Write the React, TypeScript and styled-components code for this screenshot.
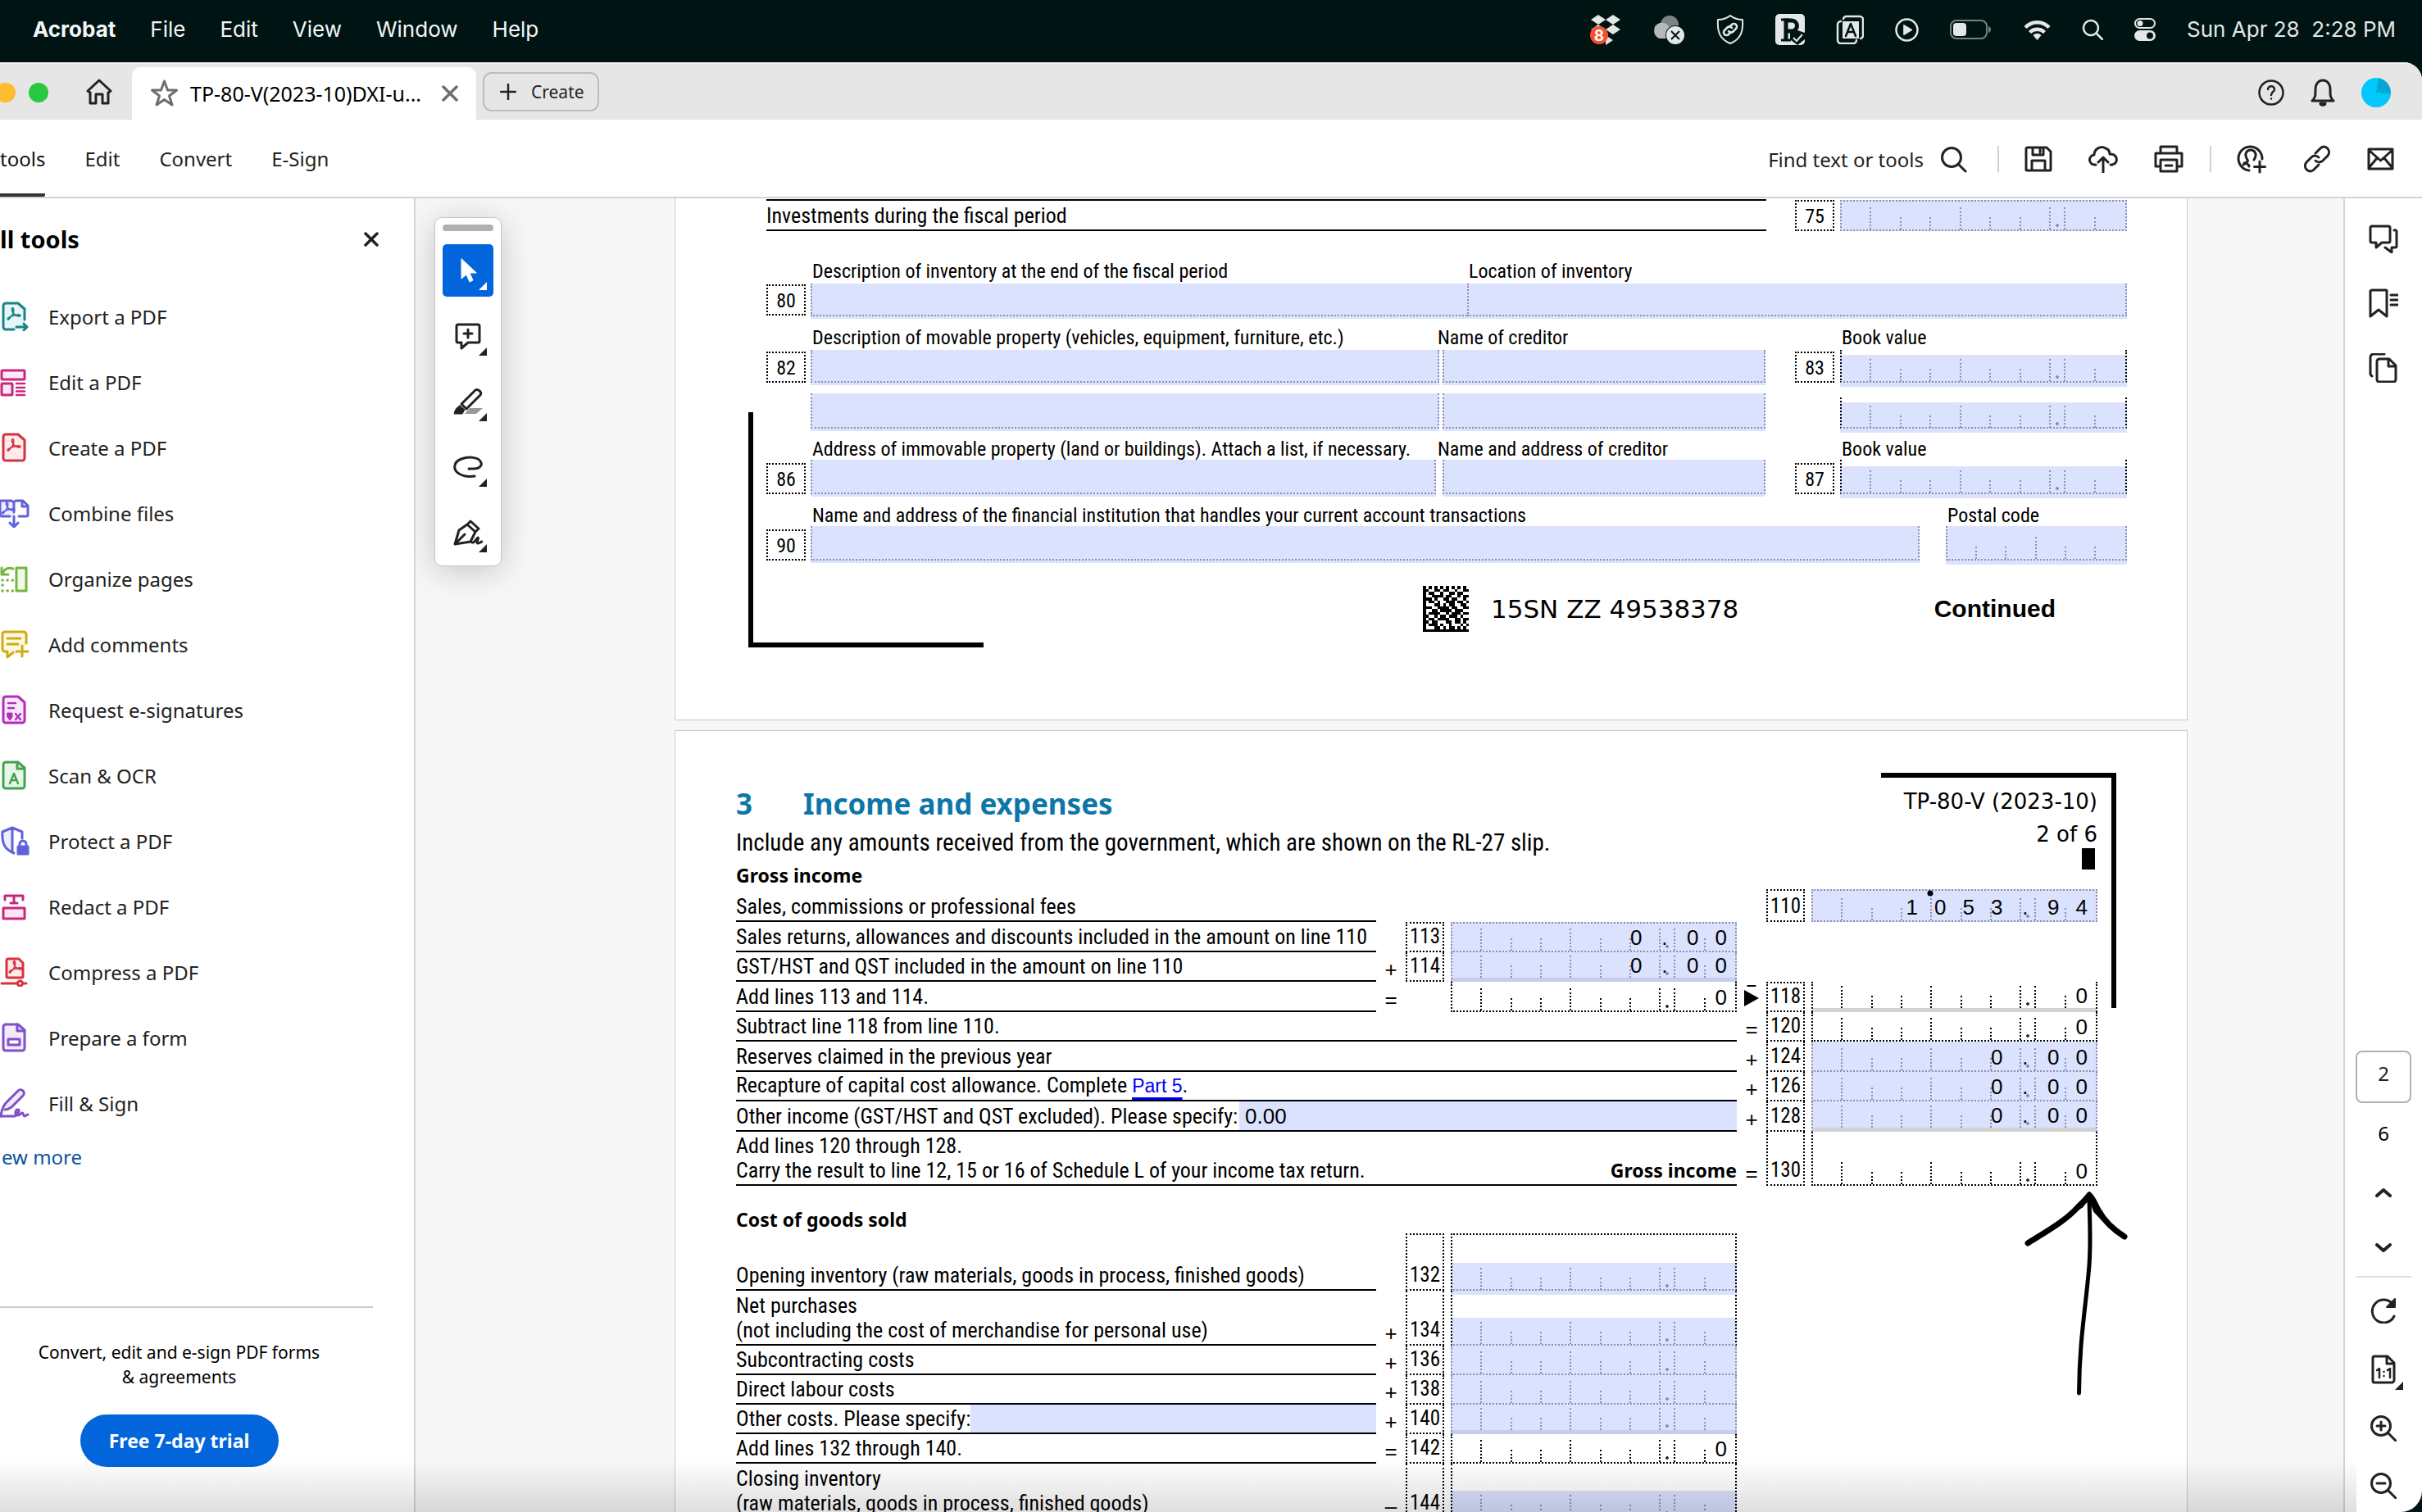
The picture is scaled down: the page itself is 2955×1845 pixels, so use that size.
import React from 'react';
import styled, { createGlobalStyle, css } from 'styled-components';

const ui = '"Noto Sans", "Open Sans", sans-serif';
const mac = 'Inter, Roboto, sans-serif';
const form = '"Roboto Condensed", Roboto, sans-serif';
const machine = '"DejaVu Sans", sans-serif';
const entry = '"Liberation Sans", Arial, sans-serif';

const ink = '#222222';
const blue = '#0265dc';
const field = '#dae2fe';
const fieldInk = '#8990b3';
const edge = '#d3d3d3';

const GlobalStyle = createGlobalStyle`
  *, *::before, *::after { box-sizing: border-box; }
  body { margin: 0; background: #001413; font-family: ${ui}; color: ${ink}; overflow: hidden; }
  h1, h2, h3, p, ul { margin: 0; padding: 0; }
  button, input { font: inherit; color: inherit; border: 0; padding: 0; margin: 0; background: none; border-radius: 0; }
  svg { display: block; flex: none; }
`;

/* ---------- shell ---------- */

const Shell = styled.div`
  position: relative;
  height: 100vh;
  display: flex;
  flex-direction: column;
`;

const MenuBar = styled.header`
  flex: none;
  height: 76px;
  padding: 0 32px 4px 40px;
  display: flex;
  align-items: center;
  justify-content: space-between;
  font-family: ${mac};
  font-size: 26px;
  color: #f4f7f7;
`;

const Menus = styled.nav`
  display: flex;
  gap: 42px;
`;

const MenuButton = styled.button<{ $strong?: boolean }>`
  font-weight: ${(p) => (p.$strong ? 700 : 400)};
  line-height: 32px;
`;

const Status = styled.div`
  display: flex;
  align-items: center;
  color: #e3e7e7;
`;

const StatusIcons = styled.div`
  display: flex;
  align-items: center;
  gap: 38px;
  margin-right: 38px;
`;

const Clock = styled.time`
  white-space: pre;
  line-height: 32px;
`;

const Win = styled.div`
  flex: 1;
  min-height: 0;
  display: flex;
  flex-direction: column;
  background: #fff;
  border-radius: 0 22px 26px 0;
  overflow: hidden;
`;

const TitleBar = styled.div`
  flex: none;
  height: 70px;
  display: flex;
  background: #e6e6e6;
  border-top: 2px solid #f3f3f3;
`;

const Lights = styled.div`
  display: flex;
  align-items: center;
  gap: 16px;
  width: 105px;
  padding-top: 2px;
`;

const Light = styled.span<{ $color: string; $cut?: boolean }>`
  width: ${(p) => (p.$cut ? 19 : 24)}px;
  height: 24px;
  border-radius: ${(p) => (p.$cut ? '4px 12px 12px 4px' : '12px')};
  background: ${(p) => p.$color};
`;

const IconButton = styled.button`
  display: flex;
  align-items: center;
  justify-content: center;
`;

const Tab = styled.div`
  margin: 4px 8px 0 24px;
  width: 420px;
  padding: 0 22px;
  display: flex;
  align-items: center;
  background: #fff;
  border-radius: 10px 10px 0 0;
  color: #000;
  font-size: 25px;
`;

const TabName = styled.span`
  flex: 1;
  margin-left: 14px;
  white-space: nowrap;
`;

const CreateButton = styled.button`
  align-self: center;
  display: flex;
  align-items: center;
  gap: 18px;
  height: 48px;
  padding: 0 16px 0 19px;
  border: 2px solid #bdbdbd;
  border-radius: 11px;
  font-size: 21px;
`;

const TitleActions = styled.div`
  margin-left: auto;
  padding: 2px 38px 0 0;
  display: flex;
  align-items: center;
  gap: 32px;
`;

const Avatar = styled.span`
  width: 36px;
  height: 36px;
  border-radius: 50%;
  background: conic-gradient(from 10deg, #05a8d2 0 85deg, #00c8ff 85deg);
`;

const ToolBar = styled.div`
  flex: none;
  height: 96px;
  display: flex;
  align-items: stretch;
  border-bottom: 2px solid ${edge};
  font-size: 24px;
`;

const Modes = styled.nav`
  display: flex;
  gap: 48px;
`;

const Mode = styled.button<{ $on?: boolean }>`
  padding-top: 4px;
  color: ${(p) => (p.$on ? '#111' : ink)};
  border-bottom: 4px solid ${(p) => (p.$on ? '#333' : 'transparent')};
  border-radius: 0 0 2px 0;
`;

const Actions = styled.div`
  margin-left: auto;
  padding: 2px 34px 0 0;
  display: flex;
  align-items: center;
`;

const Find = styled.button`
  display: flex;
  align-items: center;
  gap: 20px;
  margin-right: 37px;
`;

const Rule = styled.span`
  width: 2px;
  height: 32px;
  background: #cfcfcf;
`;

const ActionGroup = styled.div`
  display: flex;
  align-items: center;
  gap: 44px;
  margin-left: 31px;
  margin-right: 32px;
  &:last-child { margin-right: 0; }
`;

const Body = styled.div`
  flex: 1;
  min-height: 0;
  display: flex;
`;

/* ---------- left panel ---------- */

const Panel = styled.aside`
  flex: none;
  width: 507px;
  border-right: 2px solid ${edge};
  display: flex;
  flex-direction: column;
`;

const PanelHead = styled.div`
  display: flex;
  align-items: center;
  justify-content: space-between;
  padding: 30px 43px 0 0;
`;

const PanelTitle = styled.h2`
  font-size: 29px;
  line-height: 40px;
  color: #000;
`;

const ToolList = styled.ul`
  list-style: none;
  padding-top: 34px;
`;

const Tool = styled.button`
  display: flex;
  align-items: center;
  gap: 23px;
  width: 100%;
  height: 80px;
  font-size: 24px;
  text-align: left;
`;

const ViewMore = styled.a`
  align-self: flex-start;
  padding-left: 2px;
  margin-top: 8px;
  font-size: 24px;
  line-height: 36px;
  color: #0f559f;
  text-decoration: none;
`;

const Promo = styled.div`
  margin: auto 50px 55px 0;
  padding-top: 39px;
  border-top: 2px solid #cacaca;
  display: flex;
  flex-direction: column;
  align-items: center;
  color: #000;
`;

const PromoText = styled.p`
  width: 380px;
  font-size: 21px;
  line-height: 30px;
  text-align: center;
  margin-left: -18px;
`;

const TrialButton = styled.button`
  margin: 31px 0 0 -18px;
  width: 242px;
  height: 64px;
  border-radius: 32px;
  background: ${blue};
  color: #fff;
  font-size: 23px;
  font-weight: 700;
`;

/* ---------- document ---------- */

const Canvas = styled.main`
  position: relative;
  flex: 1;
  min-width: 0;
  overflow: hidden;
  background: #f7f7f7;
`;

const Palette = styled.div`
  position: absolute;
  top: 23px;
  left: 23px;
  width: 82px;
  padding: 8px 9px 8px;
  display: flex;
  flex-direction: column;
  align-items: stretch;
  gap: 16px;
  background: #fff;
  border: 1px solid #c4c4c4;
  border-radius: 9px;
  box-shadow: 0 6px 40px rgba(0, 0, 0, 0.2);
`;

const Grip = styled.span`
  height: 8px;
  border-radius: 4px;
  background: #b1b1b1;
`;

const PaletteButton = styled.button<{ $on?: boolean }>`
  height: 64px;
  display: grid;
  place-items: center;
  border-radius: 5px;
  background: ${(p) => (p.$on ? blue : 'transparent')};
  color: ${(p) => (p.$on ? '#fff' : ink)};
  > * { grid-area: 1 / 1; }
`;

const Corner = styled.span`
  place-self: end;
  margin: 0 8px 8px 0;
  border: 5px solid transparent;
  border-right-color: currentColor;
  border-bottom-color: currentColor;
`;

const Sheet = styled.section`
  position: relative;
  margin: 0 190px 12px 316px;
  background: #fff;
  border: 1px solid #c9c9c9;
  font-family: ${form};
  font-size: 26px;
  line-height: 30px;
  color: #000;
`;

const FirstSheet = styled(Sheet)`
  border-top: 0;
  padding: 1px 73px 107px 111px;
  font-size: 24px;
`;

const SecondSheet = styled(Sheet)`
  padding: 51px 109px 40px 74px;
`;

const FrameLeft = styled.span`
  position: absolute;
  left: 89px;
  bottom: 88px;
  width: 287px;
  height: 287px;
  border-left: 6px solid #000;
  border-bottom: 6px solid #000;
`;

const FrameRight = styled.span`
  position: absolute;
  right: 86px;
  top: 51px;
  width: 287px;
  height: 287px;
  border-right: 6px solid #000;
  border-top: 6px solid #000;
`;

const Row = styled.div<{ $top?: number }>`
  display: flex;
  align-items: flex-end;
  padding-top: ${(p) => p.$top ?? 0}px;
`;

const Gap = styled.span<{ $w: number }>`
  flex: none;
  width: ${(p) => p.$w}px;
`;

const RuledText = styled.p`
  flex: 1;
  height: 39px;
  padding-top: 3px;
  border-top: 2px solid #000;
  border-bottom: 2px solid #000;
  font-size: 26px;
`;

const BoxNumber = styled.span<{ $drop?: number }>`
  flex: none;
  width: 48px;
  height: 38px;
  margin-bottom: ${(p) => p.$drop ?? 0}px;
  border: 2px dotted #000;
  text-align: center;
  line-height: 36px;
`;

const Labeled = styled.div<{ $w?: number }>`
  ${(p) => (p.$w ? css`flex: none; width: ${p.$w}px;` : css`flex: 1; min-width: 0;`)}
`;

const Caption = styled.label<{ $outdent?: boolean; $tight?: boolean }>`
  display: block;
  white-space: nowrap;
  line-height: ${(p) => (p.$tight ? 26 : 30)}px;
  margin-left: ${(p) => (p.$outdent ? -6 : 2)}px;
`;

const TextField = styled.input<{ $h?: number; $right?: boolean }>`
  display: block;
  width: 100%;
  height: ${(p) => p.$h ?? 42}px;
  padding: 0 8px;
  background: ${field};
  border-left: 2px dotted ${fieldInk};
  border-right: ${(p) => (p.$right ? `2px dotted ${fieldInk}` : '0')};
  border-bottom: 2px dotted ${fieldInk};
  box-shadow: 0 3px 0 ${field};
  font-family: ${entry};
  font-size: 26px;
`;

const SheetFoot = styled.div`
  display: flex;
  align-items: center;
  margin-top: 31px;
  padding-right: 87px;
  font-family: ${machine};
  font-size: 31px;
  line-height: 56px;
`;

const Serial = styled.span`
  margin-left: 27px;
`;

const Continued = styled.strong`
  margin-left: auto;
  font-family: ${entry};
  font-size: 30px;
`;

/* ---------- comb fields ---------- */

const CombBox = styled.div<{ $h: number; $fill?: boolean; $top?: boolean; $pad?: number; $open?: boolean; $bleed?: boolean }>`
  display: grid;
  height: ${(p) => p.$h}px;
  padding-top: ${(p) => p.$pad ?? 0}px;
  border: 2px dotted ${(p) => (p.$fill && !p.$pad ? fieldInk : '#000')};
  border-top-style: ${(p) => (p.$top ? 'dotted' : 'none')};
  border-bottom: ${(p) => (p.$open ? '0' : `2px dotted ${p.$fill ? fieldInk : '#000'}`)};
  background: ${(p) => (p.$fill ? `linear-gradient(${field}, ${field}) 0 ${p.$pad ?? 0}px no-repeat` : 'none')};
  background-origin: border-box;
  box-shadow: ${(p) => (p.$bleed ? `0 5px 0 ${field}` : 'none')};
  > * { grid-area: 1 / 1; }
`;

const Ticks = styled.span<{ $six?: boolean; $raise?: boolean }>`
  display: grid;
  align-items: end;
  padding-bottom: ${(p) => (p.$raise ? 5 : 0)}px;
  grid-template-columns: ${(p) => (p.$six ? 'repeat(6, 1fr)' : 'repeat(7, 2fr) 1fr repeat(2, 2fr)')};
`;

const Tick = styled.span<{ $tall?: boolean; $fill?: boolean; $last?: boolean; $point?: boolean }>`
  height: ${(p) => (p.$tall ? 27 : 15)}px;
  border-right: ${(p) => (p.$last ? '0' : `2px dotted ${p.$fill ? fieldInk : '#000'}`)};
  background: ${(p) =>
    p.$point ? `radial-gradient(circle, ${p.$fill ? fieldInk : '#333'} 2px, transparent 2px) 50% 100% / 6px 10px no-repeat` : 'none'};
`;

const Digits = styled.span<{ $raise?: boolean }>`
  display: grid;
  grid-template-columns: repeat(10, minmax(0, 1fr));
  align-items: end;
  padding-bottom: ${(p) => (p.$raise ? 5 : 1)}px;
  font-family: ${entry};
  font-size: 26px;
  line-height: 30px;
`;

const Digit = styled.input`
  width: 100%;
  height: 30px;
  text-align: center;
`;

const Total = styled.output`
  grid-column: 10;
  text-align: center;
`;

const Bar = styled.span<{ $fill?: boolean }>`
  align-self: end;
  height: 5px;
  background: ${(p) => (p.$fill ? '#c5cdef' : '#d0d3d2')};
`;

type CombProps = {
  name: string;
  h: number;
  value?: string;
  total?: boolean;
  top?: boolean;
  pad?: number;
  bar?: 'plain' | 'fill';
  bleed?: boolean;
  six?: boolean;
};

function Comb({ name, h, value = '', total, top, pad, bar, bleed, six }: CombProps) {
  const fill = !total;
  const talls = six ? [2] : [0, 3, 6, 7];
  const cells = six ? 6 : 10;
  const chars = value.padStart(cells, ' ').split('');
  return (
    <CombBox $h={h} $fill={fill} $top={top} $pad={pad} $open={!!bar} $bleed={bleed}>
      <Ticks $six={six} $raise={!!bar}>
        {Array.from({ length: cells }, (_, i) => (
          <Tick key={i} $tall={talls.includes(i)} $fill={fill} $last={i === cells - 1} $point={!six && i === 7} />
        ))}
      </Ticks>
      {total ? (
        <Digits $raise={!!bar}>
          <Total aria-label={name}>0</Total>
        </Digits>
      ) : (
        <Digits $raise={!!bar}>
          {chars.map((c, i) => (
            <Digit key={i} maxLength={1} aria-label={`${name}, position ${i + 1}`} defaultValue={c.trim()} />
          ))}
        </Digits>
      )}
      {bar && <Bar $fill={bar === 'fill'} />}
    </CombBox>
  );
}

/* ---------- second sheet ---------- */

const SheetHead = styled.div`
  display: flex;
  justify-content: space-between;
`;

const Heading = styled.h1`
  display: flex;
  gap: 62px;
  margin-top: 16px;
  font-family: ${ui};
  font-size: 35px;
  line-height: 44px;
  color: #0d76a8;
`;

const Intro = styled.p`
  margin-top: 7px;
  font-size: 29px;
  line-height: 36px;
`;

const Subheading = styled.h3<{ $top: number }>`
  margin-top: ${(p) => p.$top}px;
  font-family: ${ui};
  font-size: 23px;
  line-height: 34px;
`;

const FormId = styled.div`
  display: flex;
  flex-direction: column;
  align-items: flex-end;
  padding-top: 15px;
  font-family: ${machine};
  font-size: 26px;
  line-height: 40px;
`;

const Mark = styled.span`
  width: 16px;
  height: 26px;
  margin: -3px 3px 0 0;
  background: #000;
`;

const Line = styled.div<{ $h: number }>`
  display: grid;
  grid-template-columns: minmax(0, 1fr) 36px 47px 8px 349px 36px 47px 8px 349px;
  height: ${(p) => p.$h}px;
`;

const Desc = styled.div<{ $wide?: boolean }>`
  grid-column: 1 / ${(p) => (p.$wide ? 6 : 2)};
  display: flex;
  align-items: flex-end;
  justify-content: space-between;
  padding-bottom: 2px;
  border-bottom: 2px solid #000;
  white-space: nowrap;
`;

const Specify = styled.input<{ $left?: number }>`
  flex: 1;
  min-width: 0;
  align-self: stretch;
  margin: 0 0 -2px ${(p) => p.$left ?? 0}px;
  padding: 0 7px;
  background: ${field};
  font-family: ${entry};
  font-size: 26px;
`;

const PartLink = styled.a`
  font-family: ${entry};
  font-size: 23px;
  color: #0000f0;
  text-decoration: underline;
  text-decoration-thickness: 3px;
  text-underline-offset: 6px;
`;

const Strong = styled.strong`
  font-family: ${ui};
  font-size: 23px;
`;

const Sign = styled.span<{ $second?: boolean }>`
  grid-column: ${(p) => (p.$second ? 6 : 2)};
  align-self: end;
  text-align: center;
  font-family: ${entry};
  line-height: 30px;
`;

const Code = styled.span<{ $second?: boolean; $top?: boolean }>`
  grid-column: ${(p) => (p.$second ? 7 : 3)};
  display: flex;
  align-items: flex-end;
  justify-content: center;
  padding-bottom: 2px;
  border: 2px dotted #000;
  border-top-style: ${(p) => (p.$top ? 'dotted' : 'none')};
  font-size: 25px;
`;

const Slot = styled.div<{ $second?: boolean }>`
  grid-column: ${(p) => (p.$second ? 9 : 5)};
`;

const Carry = styled.span`
  grid-column: 6;
  display: flex;
  flex-direction: column;
  align-items: center;
  line-height: 10px;
  &::after {
    content: '';
    border: 10px solid transparent;
    border-left: 18px solid #000;
    border-right: 0;
  }
`;

const InkLayer = styled.svg`
  position: absolute;
  overflow: visible;
`;

const ArrowInk = styled(InkLayer)`
  right: 67px;
  top: 558px;
`;

const DotInk = styled(InkLayer)`
  right: 309px;
  top: 194px;
`;

/* ---------- right rail ---------- */

const Rail = styled.aside`
  flex: none;
  width: 96px;
  border-left: 2px solid ${edge};
  padding: 31px 0 16px;
  display: flex;
  flex-direction: column;
  align-items: center;
  justify-content: space-between;
`;

const RailGroup = styled.div<{ $gap: number }>`
  display: flex;
  flex-direction: column;
  align-items: center;
  gap: ${(p) => p.$gap}px;
`;

const PageInput = styled.input`
  width: 68px;
  height: 64px;
  padding-bottom: 10px;
  border: 2px solid #b1b1b1;
  border-radius: 8px;
  text-align: center;
  font-size: 24px;
`;

const PageTotal = styled.span`
  font-size: 24px;
  line-height: 36px;
  color: #000;
  margin-top: 19px;
`;

const RailRule = styled.span`
  width: 68px;
  height: 2px;
  background: #e1e1e1;
`;

const Steps = styled(RailGroup)`
  margin: 48px 0 28px;
`;

const RailTools = styled(RailGroup)`
  margin-top: 24px;
`;

const ZoomMode = styled.button`
  display: grid;
  width: 68px;
  place-items: center;
  > * { grid-area: 1 / 1; }
`;

const ZoomCorner = styled(Corner)`
  margin: 0 10px -7px 0;
`;

const BottomShade = styled.div`
  position: absolute;
  left: 0;
  right: 80px;
  bottom: 0;
  height: 64px;
  pointer-events: none;
  background: linear-gradient(rgba(0, 0, 0, 0), rgba(0, 0, 0, 0.13));
`;

/* ---------- icons ---------- */

type IconProps = { children: React.ReactNode; w?: number; h?: number; c?: string; s?: number };

function Icon({ children, w = 36, h = 36, c = 'currentColor', s = 3 }: IconProps) {
  return (
    <svg width={w} height={h} viewBox={`0 0 ${w} ${h}`} fill="none" stroke={c} strokeWidth={s} strokeLinecap="round" strokeLinejoin="round" aria-hidden="true">
      {children}
    </svg>
  );
}

const Trefoil = ({ x = 0, y = 0 }: { x?: number; y?: number }) => (
  <path transform={`translate(${x} ${y})`} strokeWidth="1.8" d="M10 22c-2-1 1-3 4-4 2-3 3-6 2.500-9-.5-2-2.500-1-2 1 1 4 4 7 8 8 3 0 3-2 0-2-3 0-6 1-9 2-1.500 2-2.500 4-3.500 4z" />
);
const fold = 'M4 5a3 3 0 0 1 3-3h15l8 7v22a3 3 0 0 1-3 3H7a3 3 0 0 1-3-3z';

const tools = [
  { name: 'Export a PDF', icon: <Icon c="#188389"><path fill="#e6f5f5" stroke="none" d={fold} /><path d="M17 34H7a3 3 0 0 1-3-3V5a3 3 0 0 1 3-3h15l8 7v13" /><Trefoil /><path d="M20 31h13M29 27l4 4-4 4" /></Icon> },
  { name: 'Edit a PDF', icon: <Icon c="#c9277f"><g fill="#fdeaf4"><rect x="2" y="4" width="28" height="11" rx="1" /><rect x="2" y="20" width="13" height="14" rx="1" /></g><path strokeWidth="2.500" d="M20 20h10M20 25h10M20 29.500h10M20 34h10" /></Icon> },
  { name: 'Create a PDF', icon: <Icon c="#d63340"><path fill="#fdebec" d={fold} /><Trefoil /></Icon> },
  { name: 'Combine files', icon: <Icon c="#6161db"><path fill="#eeeefc" stroke="none" d="M1 3h16v20H1z" /><path d="M12 22H2a2 2 0 0 1-2-2V4a1 1 0 0 1 1-1h13l3 2v12M17 17V5l2-2h9l6 6v11a2 2 0 0 1-2 2h-9M27 3v7h7M17 22v12M12 30l5 5 5-5" /><Trefoil x={-7} y={-3} /></Icon> },
  { name: 'Organize pages', icon: <Icon c="#74b73f"><rect x="20" y="5" width="12" height="28" fill="#f0f8e9" /><path d="M2 5v8h8M3 12c2-6 7-8 13-6" /><path strokeDasharray="0.100 6" strokeWidth="3.500" d="M3 20h14M3 26h1M3 33h14" /></Icon> },
  { name: 'Add comments', icon: <Icon c="#d0ac10"><path fill="#fdf8e3" stroke="none" d="M3 4h29v17l-16 12-13-6z" /><path d="M32 17V6a3 3 0 0 0-3-3H6a3 3 0 0 0-3 3v18a3 3 0 0 0 3 3h3v7l7-6M9 11h16M9 18h13M27 20v13M20 27h14" /></Icon> },
  { name: 'Request e-signatures', icon: <Icon c="#b12fb8"><path fill="#f9e9fa" d={fold} /><path strokeWidth="2.500" d="M10 10h9M10 16h7M19 23l6 7M25 23l-6 7" /><path fill="#b12fb8" strokeWidth="1" d="M9 22h6v5l-3 4-3-4z" /></Icon> },
  { name: 'Scan & OCR', icon: <Icon c="#41a350"><path fill="#e8f6ea" d={fold} /><path d="M21 2v8h9" /><path strokeWidth="2.500" d="M12 28l5-12 5 12M14 24h6" /></Icon> },
  { name: 'Protect a PDF', icon: <Icon c="#6161db"><path fill="#eeeefc" stroke="none" d="M3 7l12-5v31C7 30 2 24 3 7z" /><path d="M17 33C7 29 2 23 3 7l12-5 12 5v8M15 3v29" /><rect x="22" y="25" width="12" height="9" fill="#6161db" /><path d="M24 25v-3a4 4 0 0 1 8 0v3" /></Icon> },
  { name: 'Redact a PDF', icon: <Icon c="#c9277f"><rect x="4" y="20" width="26" height="13" fill="#fce6f2" /><path d="M6 10V5h22v5M17 5v9M13 14h8" /></Icon> },
  { name: 'Compress a PDF', icon: <Icon c="#d63340"><path fill="#fdebec" d="M8 4a2 2 0 0 1 2-2h13l5 5v16a2 2 0 0 1-2 2H10a2 2 0 0 1-2-2z" /><Trefoil x={2} y={-3} /><path d="M2 32h19M28 32h4" /><circle cx="24.500" cy="32" r="3" /></Icon> },
  { name: 'Prepare a form', icon: <Icon c="#7f50c8"><path fill="#f1eafb" d={fold} /><path d="M21 2v8h9" /><rect x="10" y="20" width="14" height="7" fill="#fff" /></Icon> },
  { name: 'Fill & Sign', icon: <Icon c="#7f50c8"><path fill="#f1eafb" d="M1 34c1-9 3-13 7-17L22 3c4-4 10 2 6 6L14 23c-3 2-6 3-8 3" /><path d="M1 34h17c4-3 7-8 4-8-4 0-4 7-1 7 4 0 4-3 6-3s1 4 3 4 2-2 4-2" /></Icon> },
];

const modules = ['1010101010101010', '1100110110010011', '1011001001101100', '1001111011001011', '1110100110110010', '1011010011101101', '1000110101100110', '1110011110110011', '1001101111011100', '1011110010111011', '1100101101110100', '1011011110011011', '1101100011011010', '1011101001000101', '1000110101101010', '1111111111111111'];

function Matrix() {
  return (
    <svg width="56" height="56" viewBox="0 0 16 16" role="img" aria-label="2D barcode" shapeRendering="crispEdges">
      {modules.map((r, y) => r.split('').map((b, x) => (b === '1' ? <rect key={`${x}-${y}`} x={x} y={y} width="1" height="1" fill="#000" /> : null)))}
    </svg>
  );
}

function Drawing() {
  return (
    <>
      <DotInk width="8" height="8" viewBox="0 0 8 8" aria-hidden="true"><circle cx="4" cy="4" r="3.500" /></DotInk>
      <ArrowInk width="136" height="260" viewBox="0 0 136 260" fill="none" stroke="#000" strokeLinecap="round" strokeLinejoin="round" aria-hidden="true">
        <path strokeWidth="5" d="M84 16c1 30 2 50 0 78-4 50-12 90-12.500 156" />
        <path strokeWidth="7" d="M9 67c24-15 47-28 61-44 5-5 10-9 14-15 6 6 7 12 12 20 7 13 17 22 31 31" />
        <path fill="#000" strokeWidth="2" d="M84 5l-15 18-20 16 26-16 9-11 6 16 16 17-11-17z" />
      </ArrowInk>
    </>
  );
}

/* ---------- page ---------- */

export default function App() {
  return (
    <Shell>
      <GlobalStyle />
      <MenuBar>
        <Menus>
          <MenuButton $strong>Acrobat</MenuButton>
          <MenuButton>File</MenuButton>
          <MenuButton>Edit</MenuButton>
          <MenuButton>View</MenuButton>
          <MenuButton>Window</MenuButton>
          <MenuButton>Help</MenuButton>
        </Menus>
        <Status>
          <StatusIcons>
            <svg width="38" height="38" viewBox="0 0 38 38" aria-hidden="true">
              <path fill="#e3e7e7" d="M10 1l9 6-9 6-9-6zM28 1l9 6-9 6-9-6zM10 13l9 6-9 6-9-6zM28 13l9 6-9 6-9-6zM19 26l9 6-9 6z" />
              <circle cx="11" cy="26" r="11" fill="#fb4c2b" />
              <text x="11" y="33" fontSize="19" fontWeight="700" fill="#fff" textAnchor="middle" fontFamily="Inter, sans-serif">8</text>
            </svg>
            <svg width="40" height="38" viewBox="0 0 40 38" aria-hidden="true">
              <circle cx="21" cy="13" r="11" fill="#7c8484" />
              <path fill="#b4baba" d="M9 30a10 10 0 0 1 0-19c4-1 8 0 10 3l8 12-6 4z" />
              <circle cx="28" cy="26" r="12" fill="#001413" />
              <circle cx="28" cy="26" r="11" fill="#e3e7e7" />
              <path stroke="#001413" strokeWidth="2" d="M23 21l10 10M33 21L23 31" />
            </svg>
            <Icon w={34} h={36} s={2}><path d="M17 1c5 4 10 5 15 5 1 14-2 24-15 29C4 30 1 20 2 6c5 0 10-1 15-5z" /><path strokeWidth="2.500" d="M16 15l3-3a3.500 3.500 0 0 1 5 5l-4 4a3.500 3.500 0 0 1-5-1M18 21l-3 3a3.500 3.500 0 0 1-5-5l4-4a3.500 3.500 0 0 1 5 1" /></Icon>
            <svg width="36" height="38" viewBox="0 0 36 38" aria-hidden="true">
              <rect width="36" height="38" rx="5" fill="#e3e7e7" />
              <path fill="none" stroke="#001413" strokeWidth="5" d="M13 32V8h7a6 6 0 0 1 0 13h-7" />
              <path stroke="#001413" strokeWidth="3" d="M7 7h10M7 32h12" />
              <path fill="#001413" d="M18 23l9-3 9 3v8l-9 7-9-7z" />
              <path fill="none" stroke="#e3e7e7" strokeWidth="2" d="M22 29l4 4 7-8" />
            </svg>
            <Icon w={34} h={36} s={2.5}><path d="M9 5a4 4 0 0 1 3-3h17a4 4 0 0 1 4 4v20a4 4 0 0 1-3 3" /><path d="M25 31a4 4 0 0 1-4 4H6a4 4 0 0 1-4-4V12a4 4 0 0 1 4-4" /><rect x="8" y="8" width="20" height="21" fill="#e3e7e7" stroke="none" /><path stroke="#001413" strokeWidth="2.500" d="M12 26l6-15 6 15M14 21h8" /></Icon>
            <Icon w={29} h={29} s={2.5}><circle cx="14.500" cy="14.500" r="13" /><path fill="currentColor" strokeWidth="1" d="M11 8.500l10 6-10 6z" /></Icon>
            <svg width="52" height="24" viewBox="0 0 52 24" aria-hidden="true">
              <rect x="1" y="1" width="44" height="22" rx="7" fill="none" stroke="#79807f" strokeWidth="2" />
              <rect x="4" y="4" width="16" height="16" rx="4" fill="#e3e7e7" />
              <path fill="#79807f" d="M47 8c4 1 4 7 0 8z" />
            </svg>
            <svg width="33" height="25" viewBox="0 0 33 25" fill="none" stroke="#e3e7e7" strokeWidth="4.500" aria-hidden="true">
              <path d="M2 9.500C10 1 23 1 31 9.500M7.500 15.500c5-5 13-5 18 0" />
              <path fill="#e3e7e7" stroke="none" d="M16.500 25l-5-6c3-3 7-3 10 0z" />
            </svg>
            <Icon w={26} h={26} s={2.5}><circle cx="11" cy="11" r="9" /><path d="M18 18l7 7" /></Icon>
            <svg width="26" height="28" viewBox="0 0 26 28" aria-hidden="true">
              <rect x="1" y="1" width="24" height="11" rx="5.500" fill="none" stroke="#e3e7e7" strokeWidth="2" />
              <circle cx="7" cy="6.500" r="3.500" fill="#e3e7e7" />
              <rect y="15" width="26" height="13" rx="6.500" fill="#e3e7e7" />
              <circle cx="19" cy="21.500" r="4" fill="#001413" />
            </svg>
          </StatusIcons>
          <Clock>{'Sun Apr 28  2:28 PM'}</Clock>
        </Status>
      </MenuBar>

      <Win>
        <TitleBar>
          <Lights>
            <Light $color="#febc2e" $cut />
            <Light $color="#28c840" />
          </Lights>
          <IconButton aria-label="Home"><Icon w={32} h={32}><path d="M2 15L16 2l14 13-3 2v13h-7V19h-8v11H5V17z" /></Icon></IconButton>
          <Tab>
            <Icon w={35} h={36} c="#6e6e6e"><path d="M17.500 3l4 11h11l-9 7 3.500 11-9.500-6.500L8 32l3.500-11-9-7h11z" /></Icon>
            <TabName>TP-80-V(2023-10)DXI-u...</TabName>
            <IconButton aria-label="Close tab"><Icon w={20} h={20} c="#6e6e6e" s={3.5}><path d="M2 2l16 16M18 2L2 18" /></Icon></IconButton>
          </Tab>
          <CreateButton><Icon w={20} h={20} s={2.5}><path d="M10 1v18M1 10h18" /></Icon>Create</CreateButton>
          <TitleActions>
            <IconButton aria-label="Help"><Icon w={32} h={32} s={2.5}><circle cx="16" cy="16" r="14.500" /><path d="M12 12c0-5 8-5 8 0 0 3-4 3-4 7M16 23.500v.1" /></Icon></IconButton>
            <IconButton aria-label="Notifications"><Icon w={30} h={34}><path d="M2 27c4-4 4-6 4-14C6 6 10 2 15 2s9 4 9 11c0 8 0 10 4 14z" /><path fill="currentColor" d="M12 30h6c0 3-6 3-6 0z" /></Icon></IconButton>
            <Avatar />
          </TitleActions>
        </TitleBar>

        <ToolBar>
          <Modes>
            <Mode $on>tools</Mode>
            <Mode>Edit</Mode>
            <Mode>Convert</Mode>
            <Mode>E-Sign</Mode>
          </Modes>
          <Actions>
            <Find>Find text or tools<Icon w={33} h={33}><circle cx="14" cy="14" r="11.500" /><path d="M23 23l8 8" /></Icon></Find>
            <Rule />
            <ActionGroup>
              <IconButton aria-label="Save"><Icon w={34} h={32}><path d="M2 3a2 2 0 0 1 2-1h23l5 5v22a1 1 0 0 1-1 1H3a1 1 0 0 1-1-1zM10 2v9h13V2M9 30V18h16v12M19 4v4" /></Icon></IconButton>
              <IconButton aria-label="Upload to cloud"><Icon w={36} h={34}><path d="M9 24H8A6 6 0 0 1 7 12C7 5 15 0 21 4c3 1 5 4 5 7 10-1 11 12 3 13h-2M18 33V16M12 21l6-6 6 6" /></Icon></IconButton>
              <IconButton aria-label="Print"><Icon w={36} h={34}><path d="M8 9V2h20v7M8 26H2V10h32v16h-6M8 18h20v14H8zM14 25h8" /></Icon></IconButton>
            </ActionGroup>
            <Rule />
            <ActionGroup>
              <IconButton aria-label="Share with people"><Icon w={37} h={36}><path d="M31 18A14.500 14.500 0 1 0 15 32M15 27c0-3-5-4-6-4M8 25c3-4 7-3 5-6-5-8 0-12 4-12s9 4 4 12M28 21v13M21.500 27.500h13" /></Icon></IconButton>
              <IconButton aria-label="Copy link"><Icon w={34} h={34}><path d="M15 10l6-6c6-6 14 3 9 9l-6 6c-3 3-7 2-9 0M19 24l-6 6c-6 6-14-3-9-9l6-6c3-3 7-2 9 0" /></Icon></IconButton>
              <IconButton aria-label="Email"><Icon w={33} h={28}><path d="M2 2h29v24H2zM2 3l14.500 13L31 3M2 25l10-12M31 25L21 13" /></Icon></IconButton>
            </ActionGroup>
          </Actions>
        </ToolBar>

        <Body>
          <Panel>
            <PanelHead>
              <PanelTitle>ll tools</PanelTitle>
              <IconButton aria-label="Close panel"><Icon w={18} h={18} s={3.5}><path d="M2 2l14 14M16 2L2 16" /></Icon></IconButton>
            </PanelHead>
            <ToolList>
              {tools.map((t) => (
                <li key={t.name}><Tool>{t.icon}{t.name}</Tool></li>
              ))}
            </ToolList>
            <ViewMore href="#more">ew more</ViewMore>
            <Promo>
              <PromoText>Convert, edit and e-sign PDF forms<br />&amp; agreements</PromoText>
              <TrialButton>Free 7-day trial</TrialButton>
            </Promo>
          </Panel>

          <Canvas>
            <FirstSheet>
              <FrameLeft />
              <Row>
                <RuledText>Investments during the fiscal period</RuledText>
                <Gap $w={35} /><BoxNumber>75</BoxNumber><Gap $w={7} />
                <Labeled $w={350}><Comb name="Line 75" h={38} top /></Labeled>
              </Row>

              <Row $top={34}>
                <BoxNumber $drop={1}>80</BoxNumber><Gap $w={6} />
                <Labeled><Caption htmlFor="f80a">Description of inventory at the end of the fiscal period</Caption><TextField id="f80a" $h={40} /></Labeled>
                <Labeled $w={805}><Caption htmlFor="f80b">Location of inventory</Caption><TextField id="f80b" $h={40} $right /></Labeled>
              </Row>

              <Row $top={11}>
                <BoxNumber>82</BoxNumber><Gap $w={6} />
                <Labeled><Caption htmlFor="f82a">Description of movable property (vehicles, equipment, furniture, etc.)</Caption><TextField id="f82a" $h={40} $right /></Labeled>
                <Gap $w={4} />
                <Labeled $w={394}><Caption htmlFor="f82b" $outdent>Name of creditor</Caption><TextField id="f82b" $h={40} $right /></Labeled>
                <Gap $w={36} /><BoxNumber>83</BoxNumber><Gap $w={7} />
                <Labeled $w={350}><Caption as="span">Book value</Caption><Comb name="Line 83" h={40} pad={6} bleed /></Labeled>
              </Row>
              <Row $top={13}>
                <Gap $w={54} />
                <Labeled><TextField aria-label="Movable property, second entry" $h={43} $right /></Labeled>
                <Gap $w={4} />
                <Labeled $w={394}><TextField aria-label="Creditor, second entry" $h={43} $right /></Labeled>
                <Gap $w={91} />
                <Labeled $w={350}><Comb name="Line 83, second entry" h={38} pad={6} bleed /></Labeled>
              </Row>

              <Row $top={12}>
                <BoxNumber>86</BoxNumber><Gap $w={6} />
                <Labeled><Caption htmlFor="f86a" $tight>Address of immovable property (land or buildings). Attach a list, if necessary.</Caption><TextField id="f86a" $h={42} $right /></Labeled>
                <Gap $w={8} />
                <Labeled $w={394}><Caption htmlFor="f86b" $outdent $tight>Name and address of creditor</Caption><TextField id="f86b" $h={42} $right /></Labeled>
                <Gap $w={36} /><BoxNumber>87</BoxNumber><Gap $w={7} />
                <Labeled $w={350}><Caption as="span" $tight>Book value</Caption><Comb name="Line 87" h={42} pad={8} bleed /></Labeled>
              </Row>

              <Row $top={13}>
                <BoxNumber>90</BoxNumber><Gap $w={6} />
                <Labeled><Caption htmlFor="f90" $tight>Name and address of the financial institution that handles your current account transactions</Caption><TextField id="f90" $h={42} $right /></Labeled>
                <Gap $w={32} />
                <Labeled $w={221}><Caption as="span" $tight>Postal code</Caption><Comb name="Postal code" h={42} six bleed /></Labeled>
              </Row>

              <SheetFoot>
                <Gap $w={801} />
                <Matrix />
                <Serial>15SN ZZ 49538378</Serial>
                <Continued>Continued</Continued>
              </SheetFoot>
            </FirstSheet>

            <SecondSheet>
              <FrameRight />
              <SheetHead>
                <div>
                  <Heading><span>3</span><span>Income and expenses</span></Heading>
                  <Intro>Include any amounts received from the government, which are shown on the RL-27 slip.</Intro>
                  <Subheading $top={5}>Gross income</Subheading>
                </div>
                <FormId><span>TP-80-V (2023-10)</span><span>2 of 6</span><Mark /></FormId>
              </SheetHead>

              <Line $h={40}>
                <Desc>Sales, commissions or professional fees</Desc>
                <Code $second $top>110</Code>
                <Slot $second><Comb name="Line 110" h={40} value="1053.94" top /></Slot>
              </Line>
              <Line $h={37}>
                <Desc>Sales returns, allowances and discounts included in the amount on line 110</Desc>
                <Code $top>113</Code>
                <Slot><Comb name="Line 113" h={37} value="0.00" top /></Slot>
              </Line>
              <Line $h={36}>
                <Desc>GST/HST and QST included in the amount on line 110</Desc>
                <Sign>+</Sign><Code>114</Code>
                <Slot><Comb name="Line 114" h={36} value="0.00" bar="fill" /></Slot>
              </Line>
              <Line $h={37}>
                <Desc>Add lines 113 and 114.</Desc>
                <Sign>=</Sign>
                <Slot><Comb name="Sum of lines 113 and 114" h={37} total /></Slot>
                <Carry>–</Carry><Code $second $top>118</Code>
                <Slot $second><Comb name="Line 118" h={37} total bar="plain" /></Slot>
              </Line>
              <Line $h={36}>
                <Desc $wide>Subtract line 118 from line 110.</Desc>
                <Sign $second>=</Sign><Code $second>120</Code>
                <Slot $second><Comb name="Line 120" h={36} total /></Slot>
              </Line>
              <Line $h={37}>
                <Desc $wide>Reserves claimed in the previous year</Desc>
                <Sign $second>+</Sign><Code $second>124</Code>
                <Slot $second><Comb name="Line 124" h={37} value="0.00" /></Slot>
              </Line>
              <Line $h={36}>
                <Desc $wide><span>Recapture of capital cost allowance. Complete <PartLink href="#part5">Part 5</PartLink>.</span></Desc>
                <Sign $second>+</Sign><Code $second>126</Code>
                <Slot $second><Comb name="Line 126" h={36} value="0.00" /></Slot>
              </Line>
              <Line $h={37}>
                <Desc $wide>
                  <label htmlFor="f128">Other income (GST/HST and QST excluded). Please specify:</label>
                  <Specify id="f128" $left={2} defaultValue="0.00" />
                </Desc>
                <Sign $second>+</Sign><Code $second>128</Code>
                <Slot $second><Comb name="Line 128" h={37} value="0.00" bar="plain" /></Slot>
              </Line>
              <Line $h={66}>
                <Desc $wide>
                  <span>Add lines 120 through 128.<br />Carry the result to line 12, 15 or 16 of Schedule L of your income tax return.</span>
                  <Strong>Gross income</Strong>
                </Desc>
                <Sign $second>=</Sign><Code $second>130</Code>
                <Slot $second><Comb name="Line 130" h={66} total /></Slot>
              </Line>

              <Subheading $top={24}>Cost of goods sold</Subheading>
              <Line $h={70}>
                <Desc>Opening inventory (raw materials, goods in process, finished goods)</Desc>
                <Code $top>132</Code>
                <Slot><Comb name="Line 132" h={70} pad={36} top bleed /></Slot>
              </Line>
              <Line $h={67}>
                <Desc><span>Net purchases<br />(not including the cost of merchandise for personal use)</span></Desc>
                <Sign>+</Sign><Code>134</Code>
                <Slot><Comb name="Line 134" h={67} pad={33} /></Slot>
              </Line>
              <Line $h={36}>
                <Desc>Subcontracting costs</Desc>
                <Sign>+</Sign><Code>136</Code>
                <Slot><Comb name="Line 136" h={36} /></Slot>
              </Line>
              <Line $h={36}>
                <Desc>Direct labour costs</Desc>
                <Sign>+</Sign><Code>138</Code>
                <Slot><Comb name="Line 138" h={36} /></Slot>
              </Line>
              <Line $h={36}>
                <Desc>
                  <label htmlFor="f140">Other costs. Please specify:</label>
                  <Specify id="f140" />
                </Desc>
                <Sign>+</Sign><Code>140</Code>
                <Slot><Comb name="Line 140" h={36} bar="fill" /></Slot>
              </Line>
              <Line $h={36}>
                <Desc>Add lines 132 through 140.</Desc>
                <Sign>=</Sign><Code>142</Code>
                <Slot><Comb name="Line 142" h={36} total /></Slot>
              </Line>
              <Line $h={67}>
                <Desc><span>Closing inventory<br />(raw materials, goods in process, finished goods)</span></Desc>
                <Sign>–</Sign><Code>144</Code>
                <Slot><Comb name="Line 144" h={67} pad={33} /></Slot>
              </Line>

              <Drawing />
            </SecondSheet>

            <Palette>
              <Grip />
              <PaletteButton $on aria-label="Select">
                <Icon><path fill="currentColor" strokeWidth="1" d="M10 4v24l6-5 4 9 4-2-4-9h8z" /></Icon><Corner />
              </PaletteButton>
              <PaletteButton aria-label="Comment">
                <Icon><path d="M6 4h24a2 2 0 0 1 2 2v18a2 2 0 0 1-2 2H18l-8 7v-7H6a2 2 0 0 1-2-2V6a2 2 0 0 1 2-2zM18 10v10M13 15h10" /></Icon><Corner />
              </PaletteButton>
              <PaletteButton aria-label="Highlight">
                <Icon><path fill="#999" stroke="none" d="M20 26h16l-8 7H14z" /><path fill="#fff" d="M10 21L27 4c3-2 9 3 6 6L16 27z" /><path fill="currentColor" strokeWidth="1" d="M8 23l6 5-3 5H1c1-5 3-8 7-10z" /></Icon><Corner />
              </PaletteButton>
              <PaletteButton aria-label="Draw">
                <Icon><path d="M19 20h6c8 0 10-5 9-7C32 5 18 5 10 8-1 12 0 22 7 26c5 3 12 4 19 3" /></Icon><Corner />
              </PaletteButton>
              <PaletteButton aria-label="Sign">
                <Icon><path d="M2 32L7 15l10-7 10 9-6 12zM3 31l11-11M17 8l4-4 10 9-4 4M23 30c3 1 5-5 7-6 2 0-3 7 0 7s3-2 5-2" /></Icon><Corner />
              </PaletteButton>
            </Palette>
          </Canvas>

          <Rail>
            <RailGroup $gap={43}>
              <IconButton aria-label="Comments"><Icon><path d="M4 3h20a2 2 0 0 1 2 2v16a2 2 0 0 1-2 2h-8l-7 6v-6H4a2 2 0 0 1-2-2V5a2 2 0 0 1 2-2zM31 8a2 2 0 0 1 3 2v17a2 2 0 0 1-2 2h-4v6l-8-6" /></Icon></IconButton>
              <IconButton aria-label="Bookmarks"><Icon><path d="M2 3a2 2 0 0 1 2-1h17a1 1 0 0 1 1 1v31l-10-8-10 8zM27 8h8M27 14h8M27 20h8" /></Icon></IconButton>
              <IconButton aria-label="Pages"><Icon><path d="M19 1H6a4 4 0 0 0-4 4v20a4 4 0 0 0 2 3M10 10a3 3 0 0 1 3-3h12l8 8v17a3 3 0 0 1-3 3H13a3 3 0 0 1-3-3zM24 8v8h8" /></Icon></IconButton>
            </RailGroup>
            <RailGroup $gap={0}>
              <PageInput aria-label="Page" defaultValue="2" />
              <PageTotal>6</PageTotal>
              <Steps $gap={56}>
                <IconButton aria-label="Previous page"><Icon w={20} h={12} s={4}><path d="M2 10l8-7 8 7" /></Icon></IconButton>
                <IconButton aria-label="Next page"><Icon w={20} h={12} s={4}><path d="M2 2l8 7 8-7" /></Icon></IconButton>
              </Steps>
              <RailRule />
              <RailTools $gap={38}>
                <IconButton aria-label="Rotate"><Icon w={32} h={32}><path d="M29 23A14 14 0 1 1 27 8" /><path fill="currentColor" strokeWidth="2" d="M30 2v10H20z" /></Icon></IconButton>
                <ZoomMode aria-label="Actual size">
                  <Icon w={30} h={36}><path d="M2 4a2 2 0 0 1 2-2h16l8 8v21a3 3 0 0 1-3 3H4a2 2 0 0 1-2-2zM19 2v9h9" /><path strokeWidth="2.500" d="M7 19l3-2v11M20 19l3-2v11M15.500 21v.1M15.500 26v.1" /></Icon>
                  <ZoomCorner />
                </ZoomMode>
                <IconButton aria-label="Zoom in"><Icon w={32} h={32}><circle cx="13" cy="13" r="11.500" /><path d="M22 22l9 9M13 8v10M8 13h10" /></Icon></IconButton>
                <IconButton aria-label="Zoom out"><Icon w={32} h={32}><circle cx="13" cy="13" r="11.500" /><path d="M22 22l9 9M8 13h10" /></Icon></IconButton>
              </RailTools>
            </RailGroup>
          </Rail>
        </Body>
      </Win>
      <BottomShade />
    </Shell>
  );
}
